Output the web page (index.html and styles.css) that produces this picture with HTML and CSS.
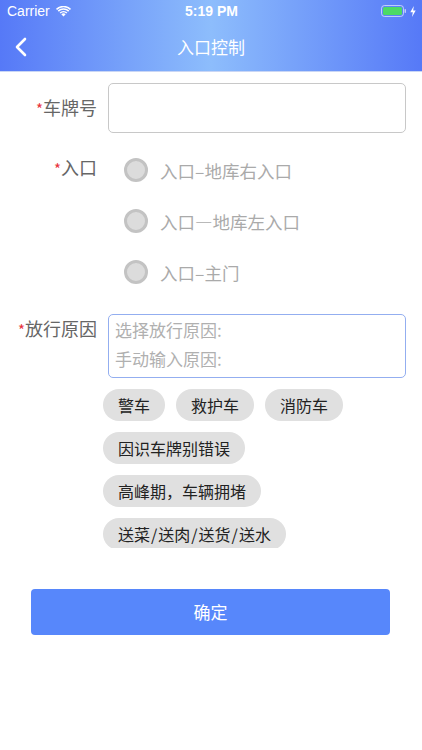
FILE: index.html
```html
<!DOCTYPE html>
<html lang="zh-CN">
<head>
  <meta charset="UTF-8" />
  <meta name="viewport" content="width=device-width, initial-scale=1.0" />
  <title>入口控制</title>
  <link rel="stylesheet" href="styles.css">
</head>
<body>
  <div class="header">
    <div class="status-bar">
      <div class="carrier">
        Carrier
        <svg class="wifi" width="15" height="11" viewBox="0 0 15 11">
          <path d="M7.5 10.5 L5.3 8.2 A3.2 3.2 0 0 1 9.7 8.2 Z" fill="#fff"/>
          <path d="M3.6 6.5 A5.6 5.6 0 0 1 11.4 6.5 L10.3 7.6 A4.1 4.1 0 0 0 4.7 7.6 Z" fill="#fff"/>
          <path d="M1.7 4.6 A8.3 8.3 0 0 1 13.3 4.6 L12.2 5.7 A6.8 6.8 0 0 0 2.8 5.7 Z" fill="#fff"/>
          <path d="M0 2.8 A10.8 10.8 0 0 1 15 2.8 L14 3.9 A9.4 9.4 0 0 0 1 3.9 Z" fill="#fff"/>
        </svg>
      </div>
      <div class="time">5:19 PM</div>
      <div class="battery">
        <svg width="26" height="12" viewBox="0 0 26 12">
          <rect x="0.5" y="0.5" width="22" height="11" rx="3" fill="none" stroke="rgba(255,255,255,0.6)"/>
          <rect x="2" y="2" width="19" height="8" rx="1.5" fill="#4cd964"/>
          <rect x="23.5" y="4" width="1.5" height="4" rx="0.7" fill="rgba(255,255,255,0.6)"/>
        </svg>
        <svg width="6" height="11" viewBox="0 0 6 11">
          <path d="M3.8 0 L0.3 6.2 H2.8 L2 11 L5.7 4.6 H3.2 Z" fill="#fff"/>
        </svg>
      </div>
    </div>
    <div class="nav">
      <svg class="back" width="12" height="20" viewBox="0 0 12 20">
        <path d="M10 2 L2 10 L10 18" fill="none" stroke="#fff" stroke-width="2.6" stroke-linecap="round" stroke-linejoin="round"/>
      </svg>
      <div class="title">入口控制</div>
    </div>
  </div>

  <div class="form">
    <div class="row row-plate">
      <div class="label"><span class="req">*</span>车牌号</div>
      <div class="input"></div>
    </div>

    <div class="row row-entry">
      <div class="label"><span class="req">*</span>入口</div>
      <div class="radios">
        <div class="radio"><span class="dot"></span>入口–地库右入口</div>
        <div class="radio"><span class="dot"></span>入口—地库左入口</div>
        <div class="radio"><span class="dot"></span>入口–主门</div>
      </div>
    </div>

    <div class="row row-reason">
      <div class="label"><span class="req">*</span>放行原因</div>
      <div class="textarea">
        <div>选择放行原因:</div>
        <div>手动输入原因:</div>
      </div>
    </div>

    <div class="tags">
      <div class="tag-row">
        <span class="tag">警车</span>
        <span class="tag">救护车</span>
        <span class="tag">消防车</span>
      </div>
      <div class="tag-row"><span class="tag">因识车牌别错误</span></div>
      <div class="tag-row"><span class="tag">高峰期，车辆拥堵</span></div>
      <div class="tag-row"><span class="tag">送菜<i>/</i>送肉<i>/</i>送货<i>/</i>送水</span></div>
    </div>

    <div class="submit">确定</div>
  </div>
</body>
</html>
```

FILE: styles.css
```css
/* Reset */
* { margin: 0; padding: 0; box-sizing: border-box; }
body {
  width: 422px;
  background: #fff;
  font-family: "Noto Sans CJK SC", "Noto Sans", sans-serif;
  color: #333;
}

/* Header: status bar + nav bar on a blue gradient */
.header {
  height: 72px;
  background: linear-gradient(to right, #5679f7 0%, #8dbdfc 50%, #5679f7 100%);
  border-bottom: 1px solid #c9d6f5;
  color: #fff;
}
.status-bar {
  height: 22px;
  display: flex;
  align-items: center;
  justify-content: space-between;
  padding: 0 6px 0 7px;
  font-family: "Liberation Sans", Arial, sans-serif;
  font-size: 14px;
}
.carrier {
  display: flex;
  align-items: center;
  gap: 6px;
  width: 110px;
}
.time {
  font-weight: bold;
  font-size: 14px;
}
.battery {
  width: 110px;
  display: flex;
  justify-content: flex-end;
  align-items: center;
  gap: 3px;
}
.nav {
  height: 49px;
  display: flex;
  align-items: center;
  justify-content: center;
  position: relative;
}
.back {
  position: absolute;
  left: 15px;
  top: 15px;
}
.title {
  font-size: 17px;
  line-height: 24px;
}

/* Form */
.form {
  padding-top: 11px;
}
.row {
  display: flex;
  gap: 11px;
  padding-right: 16px;
}
.label {
  width: 97px;
  flex: none;
  text-align: right;
  font-size: 18px;
  line-height: 26px;
  color: #666;
}
.req {
  color: #e8333b;
  font-size: 15px;
}
.row-plate {
  align-items: center;
  height: 50px;
}
.input {
  flex: 1;
  height: 50px;
  border: 1px solid #c8c8c8;
  border-radius: 5px;
}

/* Entry radios */
.row-entry {
  margin-top: 19px;
}
.row-entry .label {
  padding-top: 2px;
}
.radios {
  display: flex;
  flex-direction: column;
  gap: 15px;
  padding-left: 16px;
}
.radio {
  height: 36px;
  display: flex;
  align-items: center;
  gap: 12px;
  font-size: 17.5px;
  color: #aaa;
}
.dot {
  width: 24px;
  height: 24px;
  border-radius: 50%;
  border: 3px solid #c3c3c3;
  background: #dcdcdc;
}

/* Reason */
.row-reason {
  margin-top: 24px;
}
.row-reason .label {
  padding-top: 1px;
}
.textarea {
  flex: 1;
  height: 64px;
  border: 1px solid #93aef0;
  border-radius: 5px;
  padding: 0 6px;
  font-size: 17px;
  line-height: 29px;
  color: #b0b0b0;
}

/* Quick reason tags, clipped scroll area */
.tags {
  margin: 11px 0 0 103px;
  height: 159px;
  overflow: hidden;
  display: flex;
  flex-direction: column;
  gap: 11px;
}
.tag-row {
  display: flex;
  gap: 11px;
}
.tag {
  height: 32px;
  line-height: 32px;
  padding: 0 15px;
  border-radius: 16px;
  background: #e0e0e0;
  font-size: 16px;
  color: #222;
  white-space: nowrap;
}
.tag i {
  font-style: normal;
  padding: 0 1px;
}

/* Submit button */
.submit {
  margin: 41px 32px 0 31px;
  height: 46px;
  line-height: 46px;
  background: #5787fb;
  border-radius: 4px;
  color: #fff;
  text-align: center;
  font-size: 17px;
}
```
